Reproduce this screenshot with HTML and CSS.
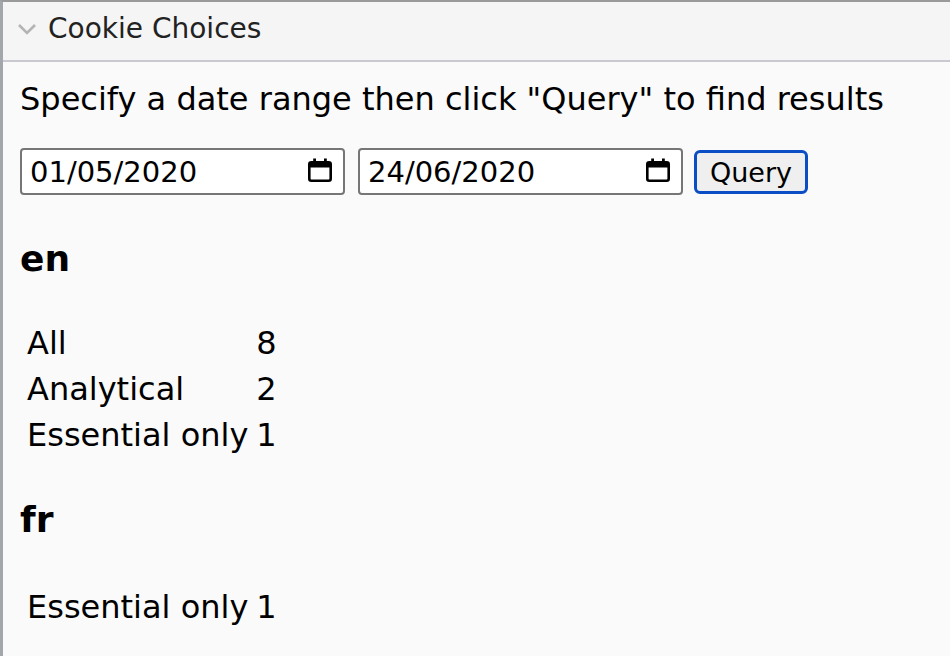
FILE: index.html
```html
<!DOCTYPE html>
<html>
<head>
<meta charset="utf-8">
<link rel="stylesheet" href="styles.css">
</head>
<body>
<div class="panel">
  <div class="header">
    <svg class="chev" width="20" height="12" viewBox="0 0 20 12"><path d="M2 2 L10 10 L18 2" fill="none" stroke="#b4b4b4" stroke-width="2.6"/></svg>
    <span class="title">Cookie Choices</span>
  </div>
  <div class="content">
    <p class="intro">Specify a date range then click "Query" to find results</p>
    <div class="controls">
      <div class="date"><span>01/05/2020</span><svg class="cal" width="26" height="26" viewBox="0 0 26 26"><rect x="2.3" y="5.3" width="21.4" height="18.4" rx="2" fill="none" stroke="#000" stroke-width="2.6"/><rect x="2" y="5" width="22" height="5.5" fill="#000"/><rect x="6.2" y="1.5" width="2.8" height="4.5" fill="#000"/><rect x="17" y="1.5" width="2.8" height="4.5" fill="#000"/></svg></div>
      <div class="date"><span>24/06/2020</span><svg class="cal" width="26" height="26" viewBox="0 0 26 26"><rect x="2.3" y="5.3" width="21.4" height="18.4" rx="2" fill="none" stroke="#000" stroke-width="2.6"/><rect x="2" y="5" width="22" height="5.5" fill="#000"/><rect x="6.2" y="1.5" width="2.8" height="4.5" fill="#000"/><rect x="17" y="1.5" width="2.8" height="4.5" fill="#000"/></svg></div>
      <button class="query">Query</button>
    </div>
    <h3 class="lang lang-en">en</h3>
    <table class="stats stats-en">
      <tr><td>All</td><td>8</td></tr>
      <tr><td>Analytical</td><td>2</td></tr>
      <tr><td>Essential only</td><td>1</td></tr>
    </table>
    <h3 class="lang lang-fr">fr</h3>
    <table class="stats stats-fr">
      <tr><td>Essential only</td><td>1</td></tr>
    </table>
  </div>
</div>
</body>
</html>
```
FILE: styles.css
```css
html, body {
  margin: 0;
  padding: 0;
  background: #fafafa;
  font-family: "DejaVu Sans", Verdana, sans-serif;
  color: #000;
}
.panel {
  border-left: 3px solid #a3a6ab;
  border-top: 2px solid #9a9a9a;
  min-height: 654px;
}
.header {
  height: 60px;
  box-sizing: border-box;
  background: #f5f5f5;
  border-bottom: 2px solid #cac8d0;
  display: flex;
  align-items: flex-start;
  padding: 11px 0 0 14px;
}
.chev {
  margin-top: 10px;
  margin-right: 11px;
}
.title {
  font-size: 28px;
  line-height: 32px;
  color: #222;
}
.content {
  padding: 0 17px;
}
.intro {
  font-size: 32px;
  line-height: 40px;
  margin: 17px 0 0;
}
.controls {
  display: flex;
  align-items: center;
  margin-top: 29px;
  gap: 13px;
}
.date {
  width: 325px;
  height: 47px;
  box-sizing: border-box;
  border: 2px solid #767676;
  border-radius: 4px;
  background: #fff;
  display: flex;
  align-items: center;
  justify-content: space-between;
  padding: 0 10px 0 8px;
  font-size: 29px;
}
.cal {
  margin-top: -3px;
}
.query {
  font-family: inherit;
  font-size: 27px;
  height: 44px;
  width: 114px;
  box-sizing: border-box;
  border: 3px solid #0b4dc4;
  border-radius: 6px;
  background: #efefef;
  color: #000;
  padding: 2px 0 0;
  margin-left: -2px;
}
.lang {
  font-size: 36px;
  line-height: 40px;
  font-weight: bold;
  margin: 0;
}
.lang-en {
  margin-top: 44px;
}
.lang-fr {
  margin-top: 42px;
}
.stats {
  border-collapse: collapse;
  font-size: 32px;
  margin-left: 3px;
}
.stats-en {
  margin-top: 41px;
}
.stats-fr {
  margin-top: 44px;
}
.stats td {
  padding: 0 4px;
  height: 46px;
  line-height: 46px;
}
```
